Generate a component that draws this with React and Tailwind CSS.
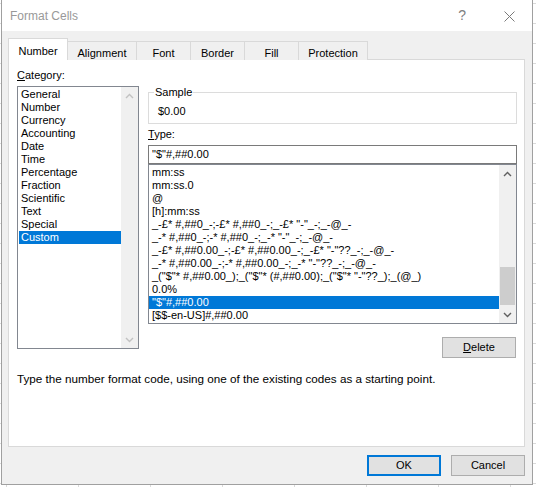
import React from 'react';

const TABS = [
  { label: 'Number', w: 'w-[60px]' },
  { label: 'Alignment', w: 'w-[70px]' },
  { label: 'Font', w: 'w-[55px]' },
  { label: 'Border', w: 'w-[55px]' },
  { label: 'Fill', w: 'w-[55px]' },
  { label: 'Protection', w: 'w-[70px]' },
];

const CATEGORIES = [
  'General',
  'Number',
  'Currency',
  'Accounting',
  'Date',
  'Time',
  'Percentage',
  'Fraction',
  'Scientific',
  'Text',
  'Special',
  'Custom',
];

const TYPES = [
  'mm:ss',
  'mm:ss.0',
  '@',
  '[h]:mm:ss',
  '_-£* #,##0_-;-£* #,##0_-;_-£* "-"_-;_-@_-',
  '_-* #,##0_-;-* #,##0_-;_-* "-"_-;_-@_-',
  '_-£* #,##0.00_-;-£* #,##0.00_-;_-£* "-"??_-;_-@_-',
  '_-* #,##0.00_-;-* #,##0.00_-;_-* "-"??_-;_-@_-',
  '_("$"* #,##0.00_);_("$"* (#,##0.00);_("$"* "-"??_);_(@_)',
  '0.0%',
  '"$"#,##0.00',
  '[$$-en-US]#,##0.00',
];

const Chevron = ({ down, color }) => (
  <svg width="9" height="6" viewBox="0 0 9 6" className="block">
    <polyline
      points={down ? '1,1 4.5,4.5 8,1' : '1,5 4.5,1.5 8,5'}
      fill="none"
      stroke={color}
      strokeWidth="1.4"
    />
  </svg>
);

const ScrollBar = ({ color, thumb }) => (
  <div className="w-[17px] bg-[#f0f0f0] flex flex-col">
    <div className="h-[17px] flex items-center justify-center">
      <Chevron color={color} />
    </div>
    <div className="flex-1 flex flex-col justify-end items-center pb-px">
      {thumb && <div className="w-[15px] h-[38px] bg-[#cdcdcd]" />}
    </div>
    <div className="h-[17px] flex items-center justify-center">
      <Chevron down color={color} />
    </div>
  </div>
);

export default function App() {
  return (
    <div className="w-[536px] h-[487px] overflow-hidden bg-white bg-[linear-gradient(#dadada_1px,transparent_1px),linear-gradient(90deg,#dadada_1px,transparent_1px)] bg-size-[72px_20px] bg-position-[6px_3px] font-['Liberation_Sans',Arial,sans-serif] text-[11px] text-black">
      <div className="ml-px w-[532px] h-[485px] border-x border-b border-[#a0a0a0] flex flex-col">
        {/* title bar */}
        <div className="h-[31px] bg-white flex items-center pl-[8px] pr-[17px]">
          <span className="text-[12px] text-[#999999]">Format Cells</span>
          <span className="ml-auto text-[14px] text-[#808080] mr-[38px]">?</span>
          <svg width="11" height="11" viewBox="0 0 11 11" className="mt-px">
            <path d="M0.5 0.5 L10.5 10.5 M10.5 0.5 L0.5 10.5" stroke="#7a7a7a" strokeWidth="1" />
          </svg>
        </div>

        <div className="flex-1 bg-[#f0f0f0] pl-[6px] pr-[7px] pt-[7px]">
          {/* tabs */}
          <div className="flex items-end h-[22px]">
            {TABS.map((t, i) =>
              i === 0 ? (
                <div
                  key={t.label}
                  className={`${t.w} h-[22px] relative z-10 bg-white border-x border-t border-[#d9d9d9] flex justify-center pt-[6px] leading-[13px]`}
                >
                  {t.label}
                </div>
              ) : (
                <div
                  key={t.label}
                  className={`${t.w} h-[19px] -ml-px bg-[#f0f0f0] border-x border-t border-[#d9d9d9] flex justify-center pt-[5px] leading-[13px]`}
                >
                  {t.label}
                </div>
              )
            )}
          </div>

          {/* panel */}
          <div className="-mt-px h-[388px] bg-white border border-[#d9d9d9] flex flex-col">
            <div className="flex pl-[8px]">
              {/* category column */}
              <div className="w-[122px] pt-[9px]">
                <div className="h-[13px] leading-[13px]">
                  <span className="underline">C</span>ategory:
                </div>
                <div className="mt-[4px] h-[263px] border border-[#828790] flex">
                  <div className="flex-1 pt-px pl-px">
                    {CATEGORIES.map((c) => (
                      <div
                        key={c}
                        className={`h-[13px] leading-[13px] pl-[2px] ${
                          c === 'Custom' ? 'bg-[#0078d7] text-white' : ''
                        }`}
                      >
                        {c}
                      </div>
                    ))}
                  </div>
                  <ScrollBar color="#c2c2c2" />
                </div>
              </div>

              {/* type column */}
              <div className="ml-[9px] w-[369px] flex flex-col">
                <div className="mt-[32px] h-[32px] border border-[#dcdcdc] relative pl-[9px] pt-[12px]">
                  <span className="absolute -top-[7px] left-[5px] bg-white px-px leading-[13px]">Sample</span>
                  <div className="leading-[13px]">$0.00</div>
                </div>
                <div className="mt-[4px] h-[13px] leading-[13px]">
                  <span className="underline">T</span>ype:
                </div>
                <div className="mt-[4px] h-[19px] border border-[#7a7a7a] pl-[3px] leading-[17px]">
                  "$"#,##0.00
                </div>
                <div className="h-[160px] border border-[#828790] flex">
                  <div className="flex-1 pt-px">
                    {TYPES.map((t) => (
                      <div
                        key={t}
                        className={`h-[13px] leading-[13px] pl-[3px] whitespace-pre ${
                          t === '"$"#,##0.00' ? 'bg-[#0078d7] text-white' : ''
                        }`}
                      >
                        {t}
                      </div>
                    ))}
                  </div>
                  <ScrollBar color="#606060" thumb />
                </div>
                <button className="mt-[13px] self-end mr-px w-[74px] h-[21px] bg-[#e1e1e1] border border-[#adadad] leading-[13px]">
                  <span className="underline">D</span>elete
                </button>
              </div>
            </div>

            <div className="mt-[14px] pl-[8px] leading-[13px] text-[11.7px]">
              Type the number format code, using one of the existing codes as a starting point.
            </div>
          </div>

          {/* buttons */}
          <div className="mt-[8px] flex justify-end gap-[10px]">
            <button className="w-[74px] h-[21px] bg-[#e1e1e1] border-2 border-[#0078d7] leading-[13px]">OK</button>
            <button className="w-[74px] h-[21px] bg-[#e1e1e1] border border-[#adadad] leading-[13px]">Cancel</button>
          </div>
        </div>
      </div>
    </div>
  );
}
